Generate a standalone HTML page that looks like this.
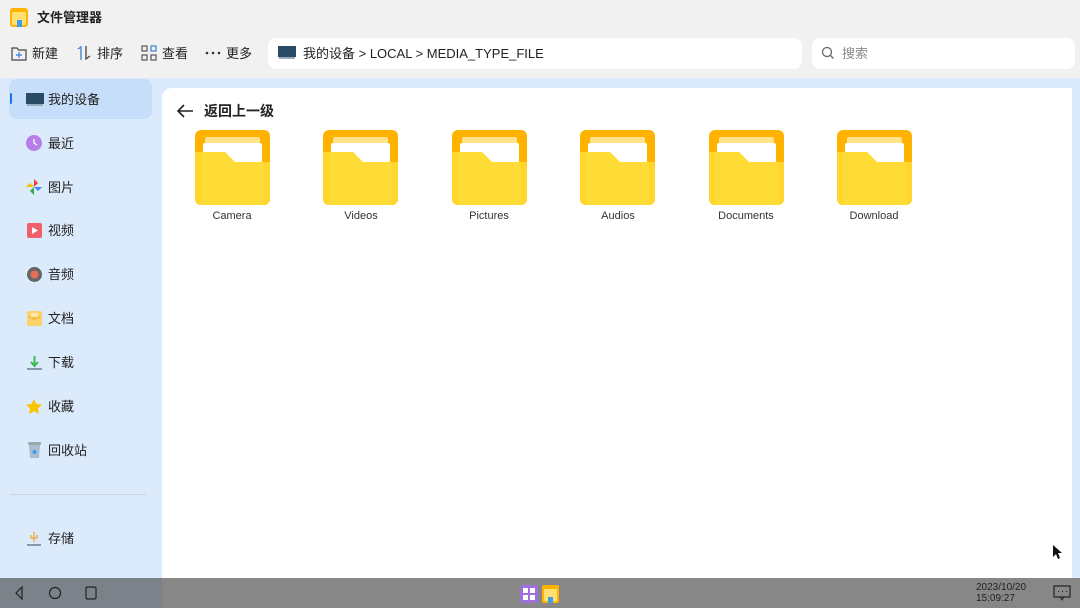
<!DOCTYPE html>
<html><head><meta charset="utf-8"><style>
*{margin:0;padding:0;box-sizing:border-box}
body{width:1080px;height:608px;overflow:hidden;background:#f1f1f1;font-family:"Liberation Sans","Noto Sans CJK SC",sans-serif;color:#222;position:relative}
.abs{position:absolute}
.t{font-size:13px;color:#222;line-height:15px}
.side{left:0;top:78px;width:1080px;height:500px;background:#dcebfb}
.main{left:162px;top:88px;width:910px;height:490px;background:#fff;border-radius:10px 0 0 0}
.fl{font-size:11px;color:#333;width:120px;text-align:center;line-height:13px}
</style></head><body>
<svg class="abs" style="left:10px;top:8px" width="18" height="19"><rect x="0" y="0" width="18" height="19" rx="3" fill="#ffb300"/><rect x="2" y="4" width="14" height="13" rx="1" fill="#ffe070"/><rect x="7" y="12" width="5" height="7" fill="#3b9cf0"/></svg>
<div class="abs" style="left:37px;top:10px;font-size:13px;font-weight:bold;line-height:15px">文件管理器</div>
<svg class="abs" style="left:11px;top:45px" width="16" height="16"><path d="M1 3h5l1.5 2H15v10H1z" fill="none" stroke="#444" stroke-width="1.2"/><path d="M8 7v6M5 10h6" stroke="#3b7dd8" stroke-width="1.2"/></svg>
<div class="abs t" style="left:32px;top:46px">新建</div>
<svg class="abs" style="left:76px;top:45px" width="16" height="16"><path d="M2 4l3-2v13" fill="none" stroke="#3b7dd8" stroke-width="1.3"/><path d="M10 1v13l4-3" fill="none" stroke="#444" stroke-width="1.3"/></svg>
<div class="abs t" style="left:97px;top:46px">排序</div>
<svg class="abs" style="left:141px;top:45px" width="16" height="16"><g fill="none" stroke="#555" stroke-width="1.2"><rect x="1" y="1" width="5" height="5"/><rect x="10" y="1" width="5" height="5" stroke="#3b7dd8"/><rect x="1" y="10" width="5" height="5"/><rect x="10" y="10" width="5" height="5"/></g></svg>
<div class="abs t" style="left:162px;top:46px">查看</div>
<svg class="abs" style="left:205px;top:51px" width="16" height="4"><circle cx="2" cy="2" r="1.3" fill="#333"/><circle cx="8" cy="2" r="1.3" fill="#333"/><circle cx="14" cy="2" r="1.3" fill="#333"/></svg>
<div class="abs t" style="left:226px;top:46px">更多</div>
<div class="abs" style="left:268px;top:38px;width:534px;height:31px;background:#fff;border-radius:8px"></div>
<svg class="abs" style="left:278px;top:46px" width="18" height="13"><rect x="0" y="0" width="18" height="11" fill="#2b4a66"/><rect x="1" y="11" width="16" height="2" fill="#9ab"/></svg>
<div class="abs t" style="left:303px;top:46px">我的设备 &gt; LOCAL &gt; MEDIA_TYPE_FILE</div>
<div class="abs" style="left:812px;top:38px;width:263px;height:31px;background:#fff;border-radius:8px"></div>
<svg class="abs" style="left:821px;top:46px" width="14" height="14"><circle cx="6" cy="6" r="4.5" fill="none" stroke="#666" stroke-width="1.3"/><path d="M9.5 9.5l3 3" stroke="#666" stroke-width="1.3"/></svg>
<div class="abs" style="left:842px;top:46px;font-size:13px;color:#888;line-height:15px">搜索</div>
<div class="abs side"></div>
<div class="abs" style="left:9px;top:79px;width:143px;height:40px;background:#c6defa;border-radius:8px"></div>
<div class="abs" style="left:10px;top:93px;width:2px;height:11px;background:#1a73e8;border-radius:1px"></div>
<svg class="abs" style="left:26px;top:93px" width="18" height="13"><rect x="0" y="0" width="18" height="11" fill="#2b4a66"/><rect x="1" y="11" width="16" height="2" fill="#9ab"/></svg>
<div class="abs t" style="left:48px;top:92px">我的设备</div>
<svg class="abs" style="left:26px;top:135px" width="16" height="16"><circle cx="8" cy="8" r="8" fill="#b57ee8"/><path d="M8 4v4l3 2" stroke="#fff" stroke-width="1.3" fill="none"/></svg>
<div class="abs t" style="left:48px;top:136px">最近</div>
<svg class="abs" style="left:26px;top:179px" width="16" height="16"><path d="M8 8L8 0 12 4z" fill="#ea4335"/><path d="M8 8L16 8 12 12z" fill="#4285f4"/><path d="M8 8L8 16 4 12z" fill="#34a853"/><path d="M8 8L0 8 4 4z" fill="#fbbc05"/></svg>
<div class="abs t" style="left:48px;top:180px">图片</div>
<svg class="abs" style="left:27px;top:223px" width="15" height="15"><rect width="15" height="15" rx="2" fill="#f0606a"/><path d="M5 4l6 3.5L5 11z" fill="#fff"/></svg>
<div class="abs t" style="left:48px;top:223px">视频</div>
<svg class="abs" style="left:27px;top:267px" width="15" height="15"><circle cx="7.5" cy="7.5" r="7.5" fill="#666"/><circle cx="7.5" cy="7.5" r="4" fill="#e86a5a"/></svg>
<div class="abs t" style="left:48px;top:267px">音频</div>
<svg class="abs" style="left:27px;top:311px" width="15" height="15"><rect width="15" height="15" rx="2" fill="#fbd36a"/><path d="M0 5l7.5 5L15 5" fill="#f4c04a"/><path d="M4 3h7M4 5h7" stroke="#fff"/></svg>
<div class="abs t" style="left:48px;top:311px">文档</div>
<svg class="abs" style="left:27px;top:355px" width="15" height="16"><path d="M7.5 1v9M4 7l3.5 4 3.5-4" stroke="#3cba54" stroke-width="2" fill="none"/><rect x="0" y="13" width="15" height="2" fill="#8898aa"/></svg>
<div class="abs t" style="left:48px;top:355px">下载</div>
<svg class="abs" style="left:26px;top:399px" width="16" height="16"><path d="M8 0l2.4 5 5.6.7-4.1 3.8 1 5.5L8 12.3 3.1 15l1-5.5L0 5.7 5.6 5z" fill="#fbc400"/></svg>
<div class="abs t" style="left:48px;top:399px">收藏</div>
<svg class="abs" style="left:28px;top:442px" width="13" height="16"><rect x="0" y="0" width="13" height="3" rx="1" fill="#9aa"/><path d="M1 3h11l-1 13H2z" fill="#aabcd0"/><circle cx="6.5" cy="10" r="2" fill="#3b9cf0"/></svg>
<div class="abs t" style="left:48px;top:443px">回收站</div>
<div class="abs" style="left:10px;top:494px;width:136px;height:1px;background:#c8d4e0"></div>
<svg class="abs" style="left:27px;top:530px" width="14" height="16"><path d="M7 2v10M4 5v3h6V5" stroke="#f0a830" stroke-width="1.3" fill="none"/><rect x="0" y="14" width="14" height="2" fill="#8898aa"/></svg>
<div class="abs t" style="left:48px;top:531px">存储</div>
<div class="abs main"></div>
<svg class="abs" style="left:176px;top:103px" width="18" height="16"><path d="M17 8H2M8 2L2 8l6 6" stroke="#222" stroke-width="1.6" fill="none"/></svg>
<div class="abs" style="left:204px;top:103px;font-size:14px;font-weight:bold;line-height:16px">返回上一级</div>
<svg width="0" height="0" style="position:absolute"><defs><g id="f"><rect x="0" y="0" width="75" height="75" rx="6" fill="#ffb300"/><rect x="10" y="7" width="55" height="20" rx="2" fill="#ffe28a"/><rect x="8" y="13" width="59" height="30" rx="2" fill="#fff"/><path d="M0 22h30l10 10h35v37a6 6 0 0 1-6 6H6a6 6 0 0 1-6-6z" fill="#ffd52e"/><path d="M6 22h24l10 10h29v43H6z" fill="#ffe03a" opacity=".6"/></g></defs></svg>
<svg class="abs" style="left:195px;top:130px" width="75" height="75"><use href="#f"/></svg>
<svg class="abs" style="left:323px;top:130px" width="75" height="75"><use href="#f"/></svg>
<svg class="abs" style="left:452px;top:130px" width="75" height="75"><use href="#f"/></svg>
<svg class="abs" style="left:580px;top:130px" width="75" height="75"><use href="#f"/></svg>
<svg class="abs" style="left:709px;top:130px" width="75" height="75"><use href="#f"/></svg>
<svg class="abs" style="left:837px;top:130px" width="75" height="75"><use href="#f"/></svg>
<div class="abs fl" style="left:172px;top:210px">Camera</div>
<div class="abs fl" style="left:301px;top:210px">Videos</div>
<div class="abs fl" style="left:429px;top:210px">Pictures</div>
<div class="abs fl" style="left:558px;top:210px">Audios</div>
<div class="abs fl" style="left:686px;top:210px">Documents</div>
<div class="abs fl" style="left:814px;top:210px">Download</div>
<svg class="abs" style="left:1052px;top:544px" width="10" height="16"><path d="M1 1v12l3-3 2 5 2-1-2-5h4z" fill="#111"/></svg>
<div class="abs" style="left:0;top:578px;width:1080px;height:30px;background:#878787"></div>
<div class="abs" style="left:0;top:578px;width:162px;height:30px;background:#7c8289"></div>
<svg class="abs" style="left:12px;top:586px" width="90" height="14"><path d="M10 1L4 7l6 6z" fill="none" stroke="#222" stroke-width="1.2"/><circle cx="43" cy="7" r="5.5" fill="none" stroke="#222" stroke-width="1.2"/><rect x="74" y="1" width="10" height="12" rx="1.5" fill="none" stroke="#222" stroke-width="1.2"/></svg>
<svg class="abs" style="left:520px;top:584px" width="40" height="20"><rect x="0" y="1" width="18" height="18" rx="3" fill="#a070e0"/><rect x="3" y="4" width="5" height="5" fill="#fff"/><rect x="10" y="4" width="5" height="5" fill="#fff"/><rect x="3" y="11" width="5" height="5" fill="#fff"/><rect x="10" y="11" width="5" height="5" fill="#fff"/><rect x="22" y="1" width="17" height="18" rx="2" fill="#ffb300"/><rect x="24" y="5" width="13" height="12" fill="#ffe070"/><rect x="28" y="13" width="5" height="6" fill="#3b9cf0"/></svg>
<div class="abs" style="left:976px;top:582px;font-size:10px;line-height:11px;color:#222">2023/10/20<br>15:09:27</div>
<svg class="abs" style="left:1053px;top:585px" width="18" height="16"><rect x="1" y="1" width="16" height="11" fill="none" stroke="#222" stroke-width="1.2"/><path d="M5 6.5h1M9 6.5h1M13 6.5h1" stroke="#222"/><path d="M7 12l2 3 2-3" fill="none" stroke="#222"/></svg>
</body></html>
